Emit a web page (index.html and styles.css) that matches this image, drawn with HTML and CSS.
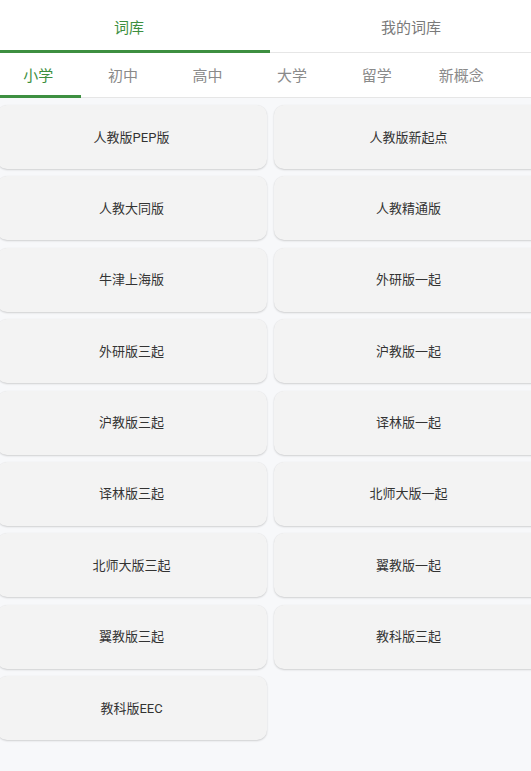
FILE: index.html
```html
<!DOCTYPE html>
<html lang="zh-CN">
<head>
<meta charset="utf-8">
<title>词库</title>
<link rel="stylesheet" href="styles.css">
</head>
<body>
<div class="page">
  <div class="top-tabs">
    <div class="top-tab active">词库</div>
    <div class="top-tab">我的词库</div>
  </div>
  <div class="sub-tabs">
    <div class="sub-tab active">小学</div>
    <div class="sub-tab">初中</div>
    <div class="sub-tab">高中</div>
    <div class="sub-tab">大学</div>
    <div class="sub-tab">留学</div>
    <div class="sub-tab">新概念</div>
    <div class="sub-tab">其他</div>
  </div>
  <div class="grid">
    <div class="card">人教版PEP版</div>
    <div class="card">人教版新起点</div>
    <div class="card">人教大同版</div>
    <div class="card">人教精通版</div>
    <div class="card">牛津上海版</div>
    <div class="card">外研版一起</div>
    <div class="card">外研版三起</div>
    <div class="card">沪教版一起</div>
    <div class="card">沪教版三起</div>
    <div class="card">译林版一起</div>
    <div class="card">译林版三起</div>
    <div class="card">北师大版一起</div>
    <div class="card">北师大版三起</div>
    <div class="card">翼教版一起</div>
    <div class="card">翼教版三起</div>
    <div class="card">教科版三起</div>
    <div class="card">教科版EEC</div>
  </div>
</div>
</body>
</html>
```
FILE: styles.css
```css
html, body {
  margin: 0;
  padding: 0;
  background: #f7f8fa;
  overflow: hidden;
  font-family: Roboto, "Noto Sans CJK SC", sans-serif;
}
.page {
  width: 564px;
  margin-left: -12px;
}
.top-tabs {
  display: grid;
  grid-template-columns: 282px 282px;
  height: 53px;
  background: #fff;
  box-shadow: inset 0 -1px 0 #e6e6e6;
}
.top-tab {
  display: flex;
  align-items: center;
  justify-content: center;
  font-size: 15px;
  color: #7a7a7a;
  padding-bottom: 1px;
}
.top-tab.active {
  color: #3d8f40;
  box-shadow: inset 0 -3px 0 #3d8f40;
}
.sub-tabs {
  display: flex;
  height: 45px;
  padding-left: 8px;
  background: #fff;
  box-shadow: inset 0 -1px 0 #e6e6e6;
}
.sub-tab {
  flex: 0 0 84.6px;
  display: flex;
  align-items: center;
  justify-content: center;
  font-size: 15px;
  color: #8a8a8a;
  padding-bottom: 3px;
}
.sub-tab.active {
  color: #3d8f40;
  box-shadow: inset 0 -3px 0 #3d8f40;
}
.grid {
  display: grid;
  grid-template-columns: 270px 270px;
  grid-auto-rows: 64px;
  gap: 7.4px 7px;
  padding: 7px 8.5px;
}
.card {
  display: flex;
  align-items: center;
  justify-content: center;
  background: #f3f3f3;
  border-radius: 10px;
  box-shadow: 0 1px 2px rgba(0, 0, 0, 0.16), 0 0 1px rgba(0, 0, 0, 0.06);
  font-size: 13px;
  color: #333;
  padding-bottom: 2px;
}
```
